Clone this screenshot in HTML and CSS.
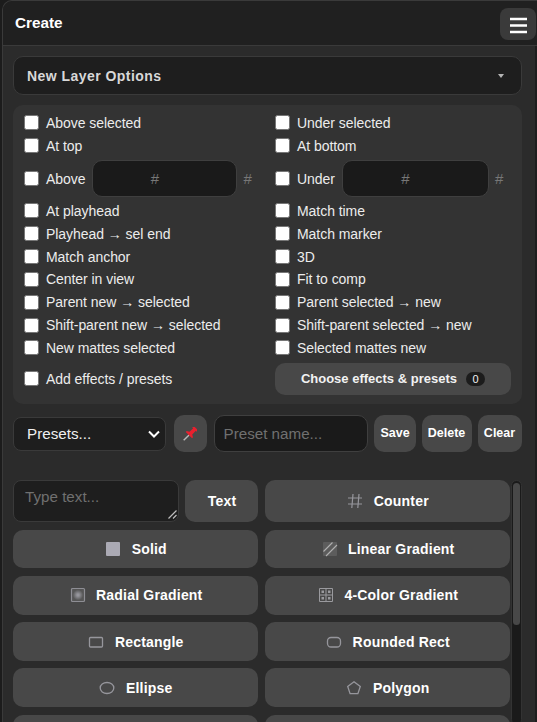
FILE: index.html
```html
<!DOCTYPE html>
<html>
<head>
  <meta charset="UTF-8" />
  <link rel="stylesheet" href="styles.css">
</head>
<body>
  <div class="panel">
    <div class="header">
      <div class="title">Create</div>
      <button class="menu-btn" aria-label="Menu">
        <svg width="17" height="17" viewBox="0 0 17 17"><path d="M0 2h17M0 8.5h17M0 15h17" stroke="#fff" stroke-width="2.6"/></svg>
      </button>
    </div>
    <div class="content">
      <div class="section-toggle">
        <span>New Layer Options</span>
        <svg class="caret" width="6" height="4" viewBox="0 0 6 4"><path d="M0 0h6L3 4z" fill="#b4b4b4"/></svg>
      </div>
      <div class="options">
        <div class="opt-grid">
          <label class="opt"><input type="checkbox"><span>Above selected</span></label>
          <label class="opt"><input type="checkbox"><span>Under selected</span></label>
          <label class="opt"><input type="checkbox"><span>At top</span></label>
          <label class="opt"><input type="checkbox"><span>At bottom</span></label>
          <div class="opt opt-num">
            <input type="checkbox"><span>Above</span>
            <input class="num" type="text" placeholder="#"><span class="hash">#</span>
          </div>
          <div class="opt opt-num">
            <input type="checkbox"><span>Under</span>
            <input class="num num-wide" type="text" placeholder="#"><span class="hash">#</span>
          </div>
          <label class="opt"><input type="checkbox"><span>At playhead</span></label>
          <label class="opt"><input type="checkbox"><span>Match time</span></label>
          <label class="opt"><input type="checkbox"><span>Playhead → sel end</span></label>
          <label class="opt"><input type="checkbox"><span>Match marker</span></label>
          <label class="opt"><input type="checkbox"><span>Match anchor</span></label>
          <label class="opt"><input type="checkbox"><span>3D</span></label>
          <label class="opt"><input type="checkbox"><span>Center in view</span></label>
          <label class="opt"><input type="checkbox"><span>Fit to comp</span></label>
          <label class="opt"><input type="checkbox"><span>Parent new → selected</span></label>
          <label class="opt"><input type="checkbox"><span>Parent selected → new</span></label>
          <label class="opt"><input type="checkbox"><span>Shift-parent new → selected</span></label>
          <label class="opt"><input type="checkbox"><span>Shift-parent selected → new</span></label>
          <label class="opt"><input type="checkbox"><span>New mattes selected</span></label>
          <label class="opt"><input type="checkbox"><span>Selected mattes new</span></label>
          <label class="opt opt-effects"><input type="checkbox"><span>Add effects / presets</span></label>
          <button class="btn choose-btn">Choose effects &amp; presets <span class="badge">0</span></button>
        </div>
      </div>
      <div class="preset-row">
        <div class="preset-select">
          <span>Presets...</span>
          <svg width="12" height="8" viewBox="0 0 12 8"><path d="M1 1.5l5 5 5-5" fill="none" stroke="#fff" stroke-width="2"/></svg>
        </div>
        <button class="btn pin-btn" aria-label="Pin">
          <svg width="14" height="14" viewBox="1.5 1.5 11 11"><g transform="rotate(45 7 7)"><path d="M7 8v6" stroke="#b9b9b9" stroke-width="1.1"/><path d="M4.5 .5h5V2h-1v4l2 1.2V8.2h-7V7.2l2-1.2V2h-1z" fill="#e8202e"/></g></svg>
        </button>
        <input class="preset-name" type="text" placeholder="Preset name...">
        <button class="btn small-btn save-btn">Save</button>
        <button class="btn small-btn delete-btn">Delete</button>
        <button class="btn small-btn clear-btn">Clear</button>
      </div>
      <div class="create-area">
        <div class="create-grid">
          <div class="text-cell">
            <div class="text-input">
              <span>Type text...</span>
              <svg class="grip" width="9" height="9" viewBox="0 0 9 9"><path d="M0.5 8.5l8-8M5 8.5l3.5-3.5" stroke="#bdbdbd" stroke-width="1.2"/></svg>
            </div>
            <button class="btn make-btn text-btn">Text</button>
          </div>
          <button class="btn make-btn">
            <svg width="16" height="16" viewBox="0 0 16 16"><path d="M6 1L4.8 15M12 1l-1.2 14M1 5h14M1 11h14" stroke="#96969c" stroke-width="1.2" fill="none"/></svg>
            Counter
          </button>
          <button class="btn make-btn">
            <svg width="16" height="16" viewBox="0 0 16 16"><rect x="1" y="1" width="14" height="14" rx="1" fill="#abaab4"/></svg>
            Solid
          </button>
          <button class="btn make-btn">
            <svg width="16" height="16" viewBox="0 0 16 16"><rect x="1" y="1" width="14" height="14" rx="1" fill="#5c5c5c"/><path d="M1.5 10.5L10.5 1.5M4 15L15 4" stroke="#b0b0b0" stroke-width="1.1"/></svg>
            Linear Gradient
          </button>
          <button class="btn make-btn">
            <svg width="16" height="16" viewBox="0 0 16 16"><defs><radialGradient id="radial-icon"><stop offset="0.15" stop-color="#96969c"/><stop offset="0.8" stop-color="#565656"/></radialGradient></defs><rect x="1.5" y="1.5" width="13" height="13" rx="1" fill="url(#radial-icon)" stroke="#8e8e94" stroke-width="1.2"/></svg>
            Radial Gradient
          </button>
          <button class="btn make-btn">
            <svg width="16" height="16" viewBox="0 0 16 16"><path d="M1.5 1.5h13v13h-13zM8 1.5v13M1.5 8h13" fill="none" stroke="#9a9a9e"/><path d="M3.5 3.5h2.5v2.5H3.5zM10 3.5h2.5v2.5H10zM3.5 10h2.5v2.5H3.5zM10 10h2.5v2.5H10z" fill="#9a9a9e"/></svg>
            4-Color Gradient
          </button>
          <button class="btn make-btn">
            <svg width="16" height="16" viewBox="0 0 16 16"><rect x="1.5" y="3.5" width="13" height="9.5" fill="none" stroke="#96969c" stroke-width="1.3" rx="1"/></svg>
            Rectangle
          </button>
          <button class="btn make-btn">
            <svg width="16" height="16" viewBox="0 0 16 16"><rect x="1.5" y="3.5" width="13" height="9.5" rx="3.5" fill="none" stroke="#96969c" stroke-width="1.3"/></svg>
            Rounded Rect
          </button>
          <button class="btn make-btn">
            <svg width="16" height="16" viewBox="0 0 16 16"><ellipse cx="8" cy="8" rx="6.8" ry="5.5" fill="none" stroke="#96969c" stroke-width="1.3"/></svg>
            Ellipse
          </button>
          <button class="btn make-btn">
            <svg width="16" height="16" viewBox="0 0 16 16"><path d="M8 1.8l6.3 4.6-2.4 7.3H4.1L1.7 6.4z" fill="none" stroke="#96969c" stroke-width="1.3"/></svg>
            Polygon
          </button>
          <button class="btn make-btn"></button>
          <button class="btn make-btn"></button>
        </div>
        <div class="scroll-track"><div class="scroll-thumb"></div></div>
      </div>
    </div>
  </div>
</body>
</html>
```

FILE: styles.css
```css
* { box-sizing: border-box; }
html, body { height: 100%; }
body {
  margin: 0;
  background: #1c1c1c;
  font-family: "Liberation Sans", Arial, sans-serif;
  font-size: 14px;
  color: #e8e8e8;
  overflow: hidden;
}
.panel {
  margin-left: 2px;
  height: 100%;
  background: #2b2b2b;
  border-left: 1px solid #3a3a3a;
  border-top: 1px solid #3a3a3a;
  border-top-left-radius: 10px;
  overflow: hidden;
  display: flex;
  flex-direction: column;
}
.header {
  flex: none;
  height: 45px;
  padding: 7px 1px 0 12px;
  background: #202020;
  border-bottom: 1px solid #3a3a3a;
  display: flex;
  justify-content: space-between;
  align-items: flex-start;
}
.title {
  font-size: 15.3px;
  font-weight: 700;
  color: #fff;
  margin-top: 6px;
}
.menu-btn {
  width: 36px;
  height: 32px;
  border: none;
  padding: 2px 0 0;
  border-radius: 8px;
  background: #3a3a3a;
  display: flex;
  align-items: center;
  justify-content: center;
}
.content {
  flex: 1;
  padding: 10px 13px 0 10px;
  border-right: 2px solid #1e1e1e;
}
.section-toggle {
  height: 39px;
  padding: 0 14px 0 13px;
  background: #1e1e1e;
  border: 1px solid #3a3a3a;
  border-radius: 10px;
  display: flex;
  align-items: center;
  justify-content: space-between;
  font-size: 14px;
  font-weight: 700;
  letter-spacing: 0.45px;
  color: #d8d8d8;
}
.caret { margin-right: 3px; }
.options {
  margin-top: 10px;
  height: 299px;
  padding: 6.5px 11px 0;
  background: #333333;
  border-radius: 10px;
}
.opt-grid {
  display: grid;
  grid-template-columns: 251px 1fr;
}
.opt {
  display: flex;
  align-items: center;
  gap: 7px;
  height: 22.83px;
  color: #ececec;
  letter-spacing: -0.05px;
}
.opt input[type=checkbox] {
  appearance: none;
  width: 15px;
  height: 15px;
  margin: 0;
  flex: none;
  background: #fff;
  border: 1px solid #767676;
  border-radius: 2.5px;
}
.opt-num {
  height: 37px;
  margin: 3px 0 2.4px;
}
.num {
  width: 145px;
  height: 36.5px;
  padding: 0 20px 0 0;
  background: #1a1a1a;
  border: 1px solid #3f3f3f;
  border-radius: 10px;
  text-align: center;
  font: 15px "Liberation Sans", Arial, sans-serif;
  color: #e8e8e8;
  outline: none;
}
.num-wide { width: 147px; }
.num::placeholder, .hash { color: #777; }
.hash { margin-left: -1px; font-size: 15px; }
.opt-effects { margin-top: 3.6px; height: 32px; }
.btn {
  border: none;
  background: #484848;
  color: #fff;
  font-family: "Liberation Sans", Arial, sans-serif;
  font-weight: 700;
  font-size: 13px;
  padding: 0;
}
.choose-btn {
  margin-top: 3.6px;
  height: 32px;
  width: 236px;
  border-radius: 10px;
  color: #f2f2f2;
}
.badge {
  display: inline-block;
  min-width: 19px;
  height: 14px;
  line-height: 14px;
  margin-left: 5.5px;
  border-radius: 7px;
  background: #1c1c1c;
  font-size: 11px;
  font-weight: 400;
  text-align: center;
}
.preset-row {
  margin-top: 11px;
  display: flex;
  align-items: center;
  gap: 6px;
}
.preset-select {
  width: 153px;
  height: 34px;
  padding: 0 5px 0 13px;
  background: #1e1e1e;
  border: 1px solid #3a3a3a;
  border-radius: 8px;
  display: flex;
  align-items: center;
  justify-content: space-between;
  font-size: 15.2px;
  color: #f0f0f0;
  margin-right: 1.5px;
  flex: none;
}
.pin-btn {
  width: 33px;
  height: 37px;
  margin-right: 1px;
  border-radius: 10px;
  flex: none;
  display: flex;
  align-items: center;
  justify-content: center;
}
.preset-name {
  width: 154px;
  height: 37px;
  padding: 0 9px;
  background: #1a1a1a;
  border: 1px solid #3f3f3f;
  border-radius: 10px;
  font: 15.2px "Liberation Sans", Arial, sans-serif;
  color: #e8e8e8;
  outline: none;
  flex: none;
}
.preset-name::placeholder, .text-input { color: #707070; }
.small-btn {
  height: 37px;
  padding-bottom: 2px;
  border-radius: 10px;
  font-size: 12.5px;
  flex: none;
}
.save-btn { width: 42px; padding-left: 1px; }
.delete-btn { width: 50px; }
.clear-btn { width: 44px; }
.create-area {
  margin-top: 27.7px;
  display: flex;
  gap: 1px;
  align-items: flex-start;
}
.create-grid {
  flex: none;
  width: 497px;
  display: grid;
  grid-template-columns: 245px 245px;
  column-gap: 7px;
  row-gap: 7.5px;
  grid-template-rows: 42.5px;
  grid-auto-rows: 38.75px;
}
.text-cell {
  display: flex;
  gap: 6px;
}
.text-input {
  position: relative;
  flex: 1;
  padding: 7px 11px;
  background: #1e1e1e;
  border: 1px solid #3a3a3a;
  border-radius: 8px;
  font-size: 15.2px;
}
.grip { position: absolute; right: 1px; bottom: 2px; }
.make-btn {
  display: flex;
  align-items: center;
  justify-content: center;
  gap: 10.5px;
  padding-left: 1px;
  border-radius: 10px;
  font-size: 14px;
  letter-spacing: 0.2px;
  color: #fff;
}
.text-btn { width: 73px; flex: none; }
.scroll-track {
  width: 11px;
  height: 245px;
  flex: none;
  background: #1a1a1a;
  border: 1px solid #333;
  border-radius: 6px;
  padding: 2px 1px;
}
.scroll-thumb {
  height: 142px;
  border-radius: 4px;
  background: #484848;
}
```
